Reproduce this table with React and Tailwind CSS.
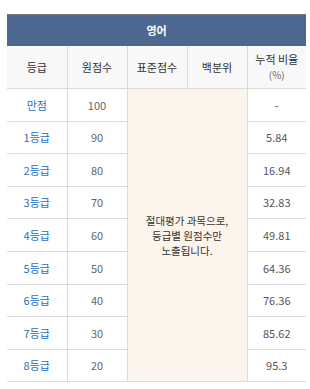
const rows = [
  { grade: '만점', raw: '100', pct: '-' },
  { grade: '1등급', raw: '90', pct: '5.84' },
  { grade: '2등급', raw: '80', pct: '16.94' },
  { grade: '3등급', raw: '70', pct: '32.83' },
  { grade: '4등급', raw: '60', pct: '49.81' },
  { grade: '5등급', raw: '50', pct: '64.36' },
  { grade: '6등급', raw: '40', pct: '76.36' },
  { grade: '7등급', raw: '30', pct: '85.62' },
  { grade: '8등급', raw: '20', pct: '95.3' },
]

const App = () => {
  return (
    <div className="w-[310px] h-[389px] bg-white pt-[14px] px-[7px] font-['Noto_Sans_CJK_KR','Noto_Sans',sans-serif] text-[11px]">
      <table className="w-[299px] table-fixed border-collapse text-center">
        <colgroup>
          <col className="w-[60px]" />
          <col className="w-[60px]" />
          <col className="w-[60px]" />
          <col className="w-[60px]" />
          <col className="w-[59px]" />
        </colgroup>
        <thead>
          {/* subject band */}
          <tr>
            <th colSpan={5} className="h-[31px] bg-[#4c6890] border-t border-[#7a7a7a] text-white font-bold">영어</th>
          </tr>
          <tr className="bg-[#f8f8f8] text-[#333]">
            <th className="h-[43px] font-normal border-r border-b border-[#dcdcdc]">등급</th>
            <th className="font-normal border-r border-b border-[#dcdcdc]">원점수</th>
            <th className="font-normal border-r border-b border-[#dcdcdc]">표준점수</th>
            <th className="font-normal border-r border-b border-[#dcdcdc]">백분위</th>
            <th className="font-normal border-b border-[#dcdcdc] leading-[15px]">
              누적 비율
              <div className="text-[10px] text-[#666]">(%)</div>
            </th>
          </tr>
        </thead>
        <tbody>
          {rows.map((r, i) => (
            <tr key={r.grade}>
              <td className="h-[32.6px] border-r border-b border-[#dcdcdc] text-[#1f6fc5]">{r.grade}</td>
              <td className="border-r border-b border-[#dcdcdc] text-[#666]">{r.raw}</td>
              {i === 0 && (
                <td colSpan={2} rowSpan={9} className="bg-[#fdf4eb] border-r border-b border-[#dcdcdc] text-[#333] text-[10.5px] leading-[15px]">
                  절대평가 과목으로,<br />등급별 원점수만<br />노출됩니다.
                </td>
              )}
              <td className="border-b border-[#dcdcdc] text-[#555]">{r.pct}</td>
            </tr>
          ))}
        </tbody>
      </table>
    </div>
  )
}

export default App
